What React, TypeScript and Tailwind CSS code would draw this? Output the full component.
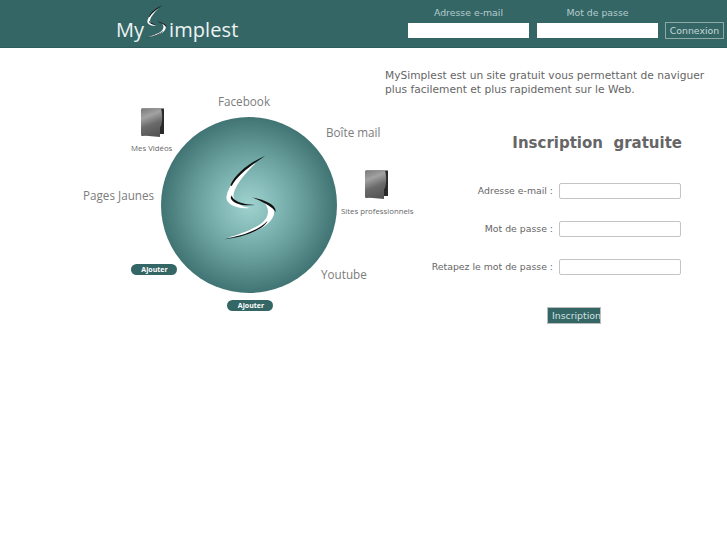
import React from "react";

function Folder({ className }: { className: string }) {
  return (
    <svg className={className} width="23" height="29" viewBox="0 0 23 29">
      <defs>
        <linearGradient id="fg" x1="0.2" y1="0" x2="0.5" y2="1">
          <stop offset="0" stopColor="#808080" />
          <stop offset="0.28" stopColor="#a2a2a2" />
          <stop offset="0.6" stopColor="#6a6a6a" />
          <stop offset="1" stopColor="#555" />
        </linearGradient>
      </defs>
      <path d="M0.500 0.500 H23 V26 H12 L0.500 28 Z" fill="#2a2a2a" />
      <path d="M0 1 L20 0.500 C21 4 21.500 9 21 13 L20 18 L19 19 L19 29 L2 27.500 Q0 27.500 0 26 Z" fill="url(#fg)" />
    </svg>
  );
}

function LogoS({ className, width, height }: { className: string; width: number; height: number }) {
  return (
    <svg className={className} width={width} height={height} viewBox="70 45 162 255">
      <path d="M170 68 C125 95 86 132 80 172 C80 192 108 208 150 204 C122 200 106 188 101 168 C101 145 130 105 170 68 Z" fill="#fff" />
      <path d="M197 47 C155 65 108 98 92 136 L96 138 C115 105 155 75 197 47 Z" fill="#111" />
      <path d="M96 166 C100 182 124 194 166 195 C130 199 100 192 93 174 Z" fill="#111" />
      <path d="M186 180 C208 198 212 222 192 244 C172 264 125 282 84 293 C140 288 196 268 216 238 C232 214 222 192 186 180 Z" fill="#fff" />
      <path d="M156 172 C190 178 230 192 228 216 C220 203 198 188 156 172 Z" fill="#111" />
      <path d="M74 298 C130 285 176 272 204 242 C192 270 130 292 74 298 Z" fill="#111" />
    </svg>
  );
}

const ui = "font-['DejaVu_Sans',sans-serif]";
const art = "font-['Open_Sans',sans-serif]";

function Row({ label }: { label: string }) {
  return (
    <div className="flex items-center justify-end h-[15px] gap-[6px]">
      <span className="text-[9.330px] text-[#666]">{label}</span>
      <div className="w-[122px] h-[16px] bg-white border border-[#c4c4c4] rounded-[2px]" />
    </div>
  );
}

export default function App() {
  return (
    <div className={`w-[727px] h-[545px] bg-white overflow-hidden ${ui}`}>
      <header className="h-[48px] bg-[#346666] border-b border-[#2e5c5c] flex">
        <div className={`w-[408px] pl-[116px] flex items-start text-[#eef3f3] text-[20px] leading-[26px] ${art}`}>
          <span className="mt-[17px]">My</span>
          <LogoS className="ml-[2px] mt-[5px]" width={21} height={33} />
          <span className="mt-[17px] ml-[2px] tracking-[0.100px]">implest</span>
        </div>
        <div className="flex flex-col pt-[5px]">
          <div className="flex text-[9.330px] text-[#b5cccc] leading-[16px]">
            <span className="w-[121px] text-center">Adresse e-mail</span>
            <span className="w-[121px] ml-[8px] text-center">Mot de passe</span>
          </div>
          <div className="flex items-center mt-[1px]">
            <div className="w-[121px] h-[15px] bg-white" />
            <div className="w-[121px] h-[15px] bg-white ml-[8px]" />
            <div className="ml-[7px] w-[59px] h-[17px] border border-[#8fa8a8] text-[9.330px] leading-[15px] text-[#c4d6d6] text-center">
              Connexion
            </div>
          </div>
        </div>
      </header>
      <main className="flex">
        <div className={`relative w-[385px] h-[300px] ${art}`}>
          <div className="absolute left-[161px] top-[69px] w-[176px] h-[176px] rounded-full bg-[radial-gradient(circle,#9fd3d0_0%,#6ea5a3_38%,#346666_80%,#3a6c6c_94%,#c4d4d4_100%)]" />
          <LogoS className="absolute left-[223px] top-[107px]" width={54} height={85} />
          <span className="absolute left-[218px] top-[45px] text-[11.700px] leading-[16px] text-[#7c7c7c]">Facebook</span>
          <span className="absolute left-[326px] top-[76px] text-[11.700px] leading-[16px] text-[#7c7c7c]">Boîte mail</span>
          <span className="absolute left-[83px] top-[139px] text-[11.700px] leading-[16px] text-[#7c7c7c]">Pages Jaunes</span>
          <span className="absolute left-[321px] top-[218px] text-[11.700px] leading-[16px] text-[#7c7c7c]">Youtube</span>
          <Folder className="absolute left-[141px] top-[60px]" />
          <span className="absolute left-[131px] top-[94px] text-[7.800px] leading-[12px] text-[#666]">Mes Vidéos</span>
          <Folder className="absolute left-[365px] top-[122px]" />
          <span className="absolute left-[341px] top-[157px] text-[7.800px] leading-[12px] text-[#666] whitespace-nowrap">Sites professionnels</span>
          <div className="absolute left-[131px] top-[216px] w-[46px] h-[11px] rounded-full bg-[#346666] text-white text-[7px] font-bold leading-[11px] text-center pl-[1px]">Ajouter</div>
          <div className="absolute left-[227px] top-[252px] w-[46px] h-[11px] rounded-full bg-[#346666] text-white text-[7px] font-bold leading-[11px] text-center pl-[2px]">Ajouter</div>
        </div>
        <div className="w-[342px]">
          <p className="mt-[21px] text-[10.670px] leading-[14px] text-[#666] whitespace-nowrap">
            MySimplest est un site gratuit vous permettant de naviguer
            <br />
            plus facilement et plus rapidement sur le Web.
          </p>
          <h1 className="mt-[36px] mr-[45px] text-right text-[15px] leading-[20px] font-bold text-[#666] whitespace-pre">Inscription  gratuite</h1>
          <div className="mr-[46px] mt-[30px] flex flex-col gap-[23px]">
            <Row label="Adresse e-mail :" />
            <Row label="Mot de passe :" />
            <Row label="Retapez le mot de passe :" />
          </div>
          <div className="mt-[33px] ml-[162px] w-[54px] h-[17px] bg-[#346666] border border-[#bbb] text-[9.330px] leading-[15px] text-[#d5e2e2] whitespace-nowrap pl-[4px]">
            Inscription
          </div>
        </div>
      </main>
    </div>
  );
}
